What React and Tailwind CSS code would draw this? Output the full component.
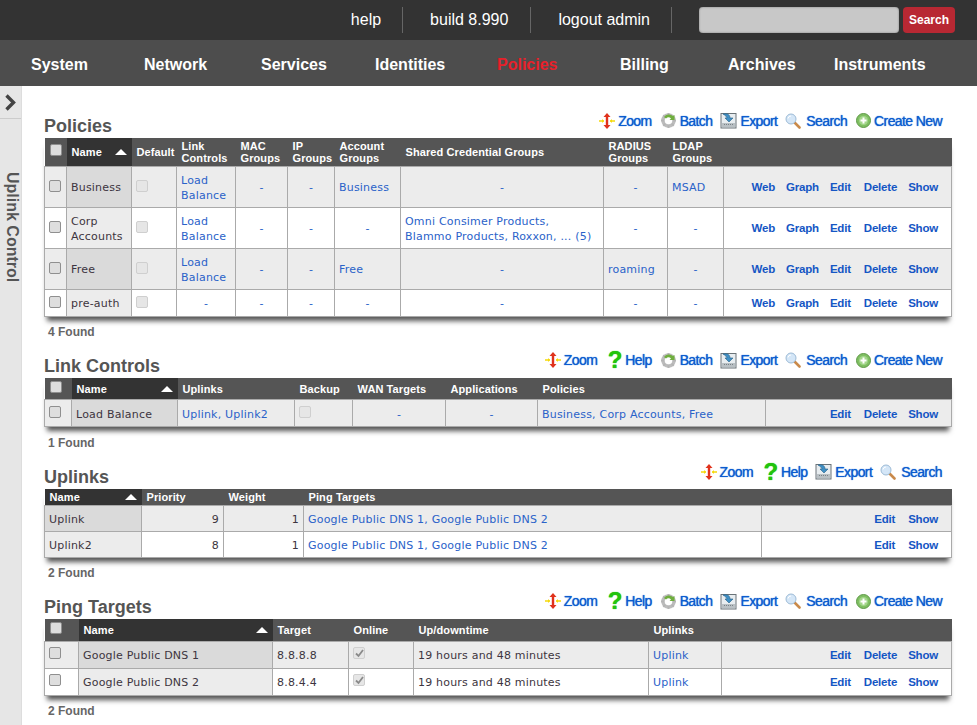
const ZoomIcon = () => (
  <svg width="16" height="16" viewBox="0 0 16 16" className="shrink-0">
    <path d="M0 8h5M11 8h5" stroke="#f5d90a" strokeWidth="1.6" />
    <path d="M5 8l-2-2v4zM11 8l2-2v4z" fill="#f5d90a" />
    <path d="M8 3v10" stroke="#e0321c" strokeWidth="2.4" />
    <path d="M8 0l3.5 4h-7zM8 16l3.5-4h-7z" fill="#e0321c" />
  </svg>
);

const HelpIcon = () => (
  <span className="ml-[2px] w-[15px] text-center font-['Liberation_Sans',sans-serif] text-[24px] leading-[16px] font-bold text-[#22c40c] [text-shadow:0_0_1px_#22c40c]">?</span>
);

const BatchIcon = () => (
  <svg width="17" height="17" viewBox="0 0 17 17" className="shrink-0">
    <circle cx="8.5" cy="8.5" r="5.5" fill="none" stroke="#bdbdbd" strokeWidth="3.5" />
    <path d="M8.5 1v3M8.5 13v3M1 8.5h3M13 8.5h3M3.2 3.2l2 2M11.8 11.8l2 2M3.2 13.8l2-2" stroke="#b5b5b5" strokeWidth="2" />
    <path d="M4 5a6 6 0 0 1 9-1l1.5-1v5h-5l1.5-1.500a3.500 3.500 0 0 0-5 0z" fill="#6fae3e" />
  </svg>
);

const ExportIcon = () => (
  <svg width="17" height="17" viewBox="0 0 17 17" className="shrink-0">
    <rect x="1" y="1.500" width="15" height="14.500" fill="#e8edf0" stroke="#6a7378" />
    <rect x="2" y="11" width="13" height="4" fill="#b9c0c4" />
    <path d="M4 12.500h9" stroke="#7b8388" strokeDasharray="1 1" />
    <path d="M3 2c5-1 7 1 7 4h3l-4 4-4-4h2c0-1-2-3-4-4z" fill="#3f8fc4" stroke="#235f8a" strokeWidth=".6" />
  </svg>
);

const SearchIcon = () => (
  <svg width="16" height="16" viewBox="0 0 16 16" className="mr-[2px] shrink-0">
    <path d="M9.500 9.500l5 5" stroke="#c98a4b" strokeWidth="2.600" strokeLinecap="round" />
    <circle cx="6" cy="6" r="5" fill="#d4e6f7" stroke="#9dbbd6" />
    <path d="M3 5.500a3 3 0 0 1 3-2.500" stroke="#fff" fill="none" />
  </svg>
);

const CreateIcon = () => (
  <svg width="15" height="15" viewBox="0 0 15 15" className="ml-[1px] shrink-0">
    <circle cx="7.500" cy="7.500" r="7" fill="#7fbf62" stroke="#5f9a48" />
    <circle cx="7.500" cy="7.500" r="4.500" fill="#a3d68b" />
    <path d="M7.500 4.500v6M4.500 7.500h6" stroke="#fff" strokeWidth="2" />
  </svg>
);

const tools = {
  Zoom: ZoomIcon,
  Help: HelpIcon,
  Batch: BatchIcon,
  Export: ExportIcon,
  Search: SearchIcon,
  "Create New": CreateIcon,
};

const Checkbox = ({ disabled, checked }) => (
  <span
    className={`mb-[4px] flex h-[12px] w-[12px] items-center justify-center rounded-[2px] border ${
      disabled ? "border-[#cfcfcf] bg-[#e6e6e6]" : "border-[#8f8f8f] bg-[#dedede]"
    }`}
  >
    {checked && (
      <svg width="9" height="9" viewBox="0 0 9 9">
        <path d="M1 4.500l2.500 2.500 4.500-6" fill="none" stroke="#8a8a8a" strokeWidth="1.800" />
      </svg>
    )}
  </span>
);

const Link = ({ children }) => <span className="text-[#2a62c9]">{children}</span>;

const Actions = ({ items }) => (
  <div className="flex justify-end gap-[11px] pr-[9px] font-['Liberation_Sans',sans-serif] text-[11.500px] font-bold tracking-[-0.2px] text-[#1556c4]">
    {items.map((a) => (
      <span key={a} className={a === "Edit" ? "mr-[2px]" : ""}>
        {a}
      </span>
    ))}
  </div>
);

const DataTable = ({ cols, head, rows, headH, nameIdx, cellPad = "" }) => (
  <table className="w-[907px] table-fixed border-collapse shadow-[0_7px_5px_-3px_#555]">
    <colgroup>
      {cols.map((w, i) => (
        <col key={i} style={{ width: w }} />
      ))}
    </colgroup>
    <thead>
      <tr style={{ height: headH }} className="bg-[#555] font-['Liberation_Sans',sans-serif] text-[11px] leading-[12px] font-bold tracking-[0.1px] text-white">
        {head.map((h, i) => (
          <th
            key={i}
            className={`px-[5px] pt-[1px] text-left align-middle font-bold ${i === nameIdx ? "bg-[#333]" : ""}`}
          >
            {h === "#check" ? (
              <Checkbox />
            ) : i === nameIdx ? (
              <div className="flex items-center justify-between">
                {h}
                <span className="h-0 w-0 border-x-[6px] border-b-[6px] border-x-transparent border-b-white" />
              </div>
            ) : (
              h
            )}
          </th>
        ))}
      </tr>
    </thead>
    <tbody className="font-['DejaVu_Sans',sans-serif] text-[11px] leading-[15px] tracking-[0.2px] text-[#3d3540]">
      {rows.map((r, ri) => (
        <tr key={ri} style={{ height: r.h }} className={ri % 2 === 0 ? "bg-[#ececec]" : "bg-white"}>
          {r.cells.map((c, i) => {
            const isName = i === nameIdx;
            const center = c === "-";
            return (
              <td
                key={i}
                className={`border border-[#aaa] px-[4px] align-middle ${cellPad} ${center ? "text-center text-[#2a62c9]" : ""} ${
                  isName ? (ri % 2 === 0 ? "bg-[#dadada]" : "bg-[#ececec]") : ""
                }`}
              >
                {c}
              </td>
            );
          })}
        </tr>
      ))}
    </tbody>
  </table>
);

const Section = ({ title, tools: names, found, foundMt = "mt-[8px]", children }) => (
  <section className="mb-[17px] w-[907px]">
    <div className="flex h-[22px] items-end justify-between">
      <h2 className="mb-[2px] font-['Liberation_Sans',sans-serif] text-[18px] leading-[20px] font-bold text-[#555]">{title}</h2>
      <div className="mb-[9px] flex items-center gap-[8px] pr-[9px] font-['Liberation_Sans',sans-serif] text-[14px] leading-[16px] tracking-[-0.6px] text-[#0b5ccf] [text-shadow:0_0_1px_#0b5ccf]">
        {names.map((n) => {
          const Icon = tools[n];
          return (
            <span key={n} className="flex items-center gap-[3px]">
              <Icon />
              {n}
            </span>
          );
        })}
      </div>
    </div>
    {children}
    <p className={`${foundMt} h-[14px] pl-[4px] font-['Liberation_Sans',sans-serif] text-[12px] leading-[14px] font-bold text-[#666]`}>{found} Found</p>
  </section>
);

const policyActions = <Actions items={["Web", "Graph", "Edit", "Delete", "Show"]} />;
const basicActions = <Actions items={["Edit", "Delete", "Show"]} />;
const lb = <Link>Load Balance</Link>;

const policies = [
  { h: 41, cells: [<Checkbox />, "Business", <Checkbox disabled />, lb, "-", "-", <Link>Business</Link>, "-", "-", <Link>MSAD</Link>, policyActions] },
  { h: 41, cells: [<Checkbox />, "Corp Accounts", <Checkbox disabled />, lb, "-", "-", "-", <Link>Omni Consimer Products, Blammo Products, Roxxon, ... (5)</Link>, "-", "-", policyActions] },
  { h: 41, cells: [<Checkbox />, "Free", <Checkbox disabled />, lb, "-", "-", <Link>Free</Link>, "-", <Link>roaming</Link>, "-", policyActions] },
  { h: 27, cells: [<Checkbox />, "pre-auth", <Checkbox disabled />, "-", "-", "-", "-", "-", "-", "-", policyActions] },
];

const dns = <Link>Google Public DNS 1, Google Public DNS 2</Link>;

const ping = [
  { h: 27, cells: [<Checkbox />, "Google Public DNS 1", "8.8.8.8", <Checkbox disabled checked />, "19 hours and 48 minutes", <Link>Uplink</Link>, basicActions] },
  { h: 27, cells: [<Checkbox />, "Google Public DNS 2", "8.8.4.4", <Checkbox disabled checked />, "19 hours and 48 minutes", <Link>Uplink</Link>, basicActions] },
];

const nav = [
  ["System", "w-[113px]"],
  ["Network", "w-[117px]"],
  ["Services", "w-[114px]"],
  ["Identities", "w-[122px]"],
  ["Policies", "w-[123px]"],
  ["Billing", "w-[108px]"],
  ["Archives", "w-[106px]"],
  ["Instruments", "w-[100px]"],
];

export default function App() {
  return (
    <div className="flex h-screen flex-col overflow-hidden bg-white font-['Liberation_Sans',sans-serif]">
      {/* top bar */}
      <header className="flex h-[40px] shrink-0 items-center justify-end bg-[#333] pr-[22px] text-[16px] text-white">
        <span className="flex h-[26px] items-center border-r border-[#666] pr-[21px]">help</span>
        <span className="flex h-[26px] items-center border-r border-[#666] pr-[22px] pl-[27px]">build 8.990</span>
        <span className="flex h-[26px] items-center border-r border-[#666] pr-[21px] pl-[27px]">logout admin</span>
        <input className="ml-[27px] h-[26px] w-[200px] rounded-[4px] bg-[#c8c8c8] shadow-[inset_0_0_2px_#777]" />
        <button className="ml-[4px] h-[26px] w-[52px] rounded-[4px] bg-[#b82833] text-[12px] font-bold text-white">Search</button>
      </header>

      <nav className="flex h-[46px] shrink-0 items-center bg-[#4d4d4d] pt-[3px] pl-[31px] text-[16px] font-bold text-white">
        {nav.map(([n, w]) => (
          <span key={n} className={`${w} ${n === "Policies" ? "text-[#e8202a]" : ""}`}>
            {n}
          </span>
        ))}
      </nav>

      <div className="flex min-h-0 flex-1">
        <aside className="w-[22px] shrink-0 border-r border-[#ddd] bg-[#e6e6e6]">
          <div className="flex h-[33px] items-center justify-center border-b border-[#ccc]">
            <svg width="13" height="17" viewBox="0 0 13 17">
              <path d="M2.500 1.500l7 7-7 7" fill="none" stroke="#444" strokeWidth="3.400" />
            </svg>
          </div>
          <div className="mt-[53px] flex justify-center text-[16px] font-bold text-[#555] [writing-mode:vertical-rl]">Uplink Control</div>
        </aside>

        <main className="min-w-0 flex-1 pt-[30px] pl-[22px]">
          <Section title="Policies" tools={["Zoom", "Batch", "Export", "Search", "Create New"]} found={4}>
            <DataTable
              cols={[22, 65, 45, 59, 52, 47, 66, 203, 64, 56, 228]}
              headH={28}
              nameIdx={1}
              cellPad="pt-[2px]"
              head={["#check", "Name", "Default", "Link Controls", "MAC Groups", "IP Groups", "Account Groups", "Shared Credential Groups", "RADIUS Groups", "LDAP Groups", ""]}
              rows={policies}
            />
          </Section>

          <Section title="Link Controls" tools={["Zoom", "Help", "Batch", "Export", "Search", "Create New"]} found={1} foundMt="mt-[9px]">
            <DataTable
              cols={[27, 106, 117, 58, 93, 92, 228, 186]}
              headH={22}
              nameIdx={1}
              cellPad="pt-[2px]"
              head={["#check", "Name", "Uplinks", "Backup", "WAN Targets", "Applications", "Policies", ""]}
              rows={[
                { h: 27, cells: [<Checkbox />, "Load Balance", <Link>Uplink, Uplink2</Link>, <Checkbox disabled />, "-", "-", <Link>Business, Corp Accounts, Free</Link>, basicActions] },
              ]}
            />
          </Section>

          <Section title="Uplinks" tools={["Zoom", "Help", "Export", "Search"]} found={2}>
            <DataTable
              cols={[97, 82, 80, 458, 190]}
              headH={16}
              nameIdx={0}
              cellPad="pt-[2px]"
              head={["Name", "Priority", "Weight", "Ping Targets", ""]}
              rows={[
                { h: 26, cells: ["Uplink", <div className="text-right">9</div>, <div className="text-right">1</div>, dns, <Actions items={["Edit", "Show"]} />] },
                { h: 26, cells: ["Uplink2", <div className="text-right">8</div>, <div className="text-right">1</div>, dns, <Actions items={["Edit", "Show"]} />] },
              ]}
            />
          </Section>

          <Section title="Ping Targets" tools={["Zoom", "Help", "Batch", "Export", "Search", "Create New"]} found={2}>
            <DataTable
              cols={[34, 194, 76, 65, 235, 73, 230]}
              headH={23}
              nameIdx={1}
              head={["#check", "Name", "Target", "Online", "Up/downtime", "Uplinks", ""]}
              rows={ping}
            />
          </Section>
        </main>
      </div>
    </div>
  );
}
